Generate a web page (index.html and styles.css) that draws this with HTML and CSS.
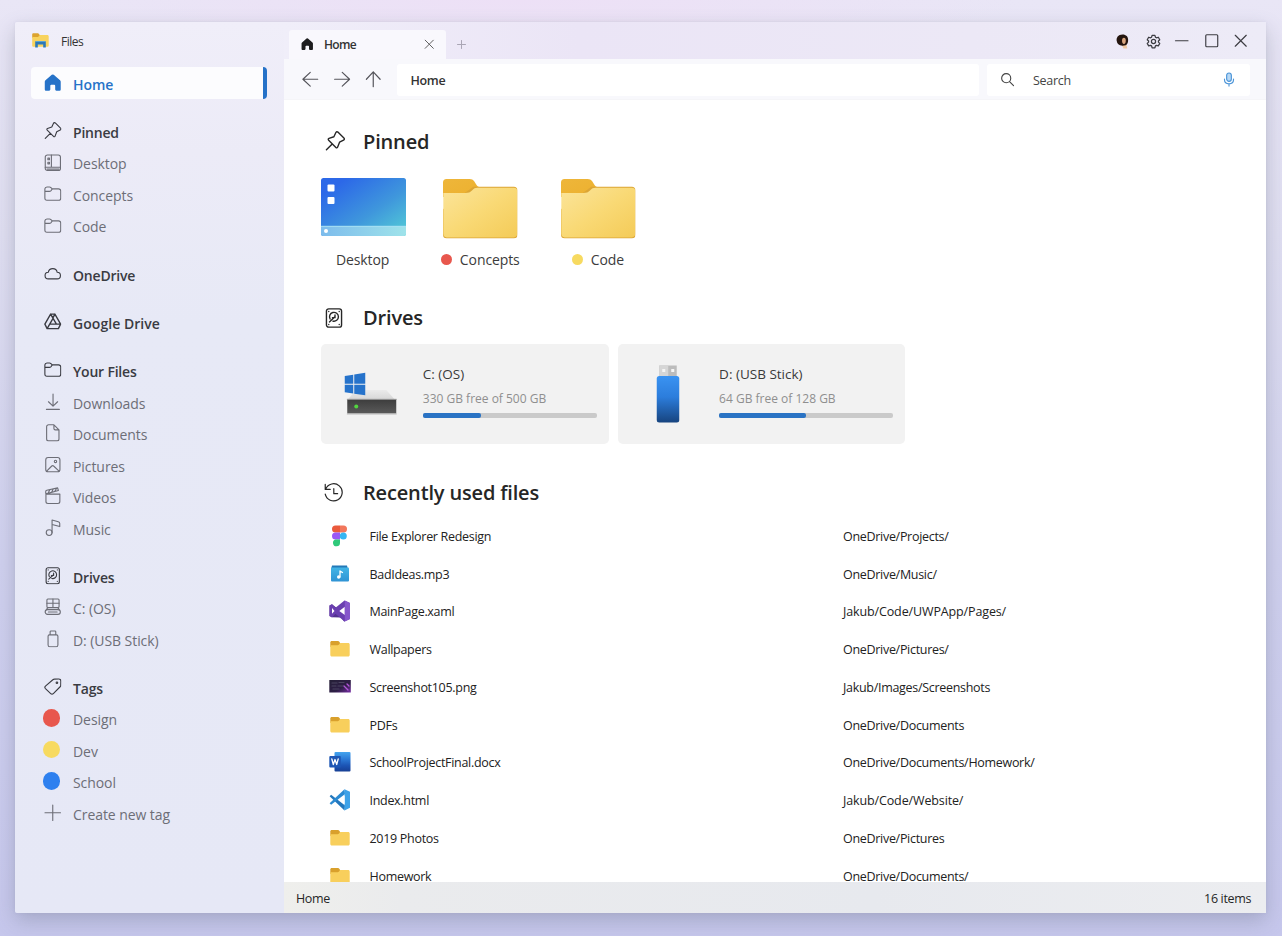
FILE: index.html
```html
<!DOCTYPE html>
<html lang="en">
<head>
<meta charset="utf-8">
<title>Files</title>
<link rel="stylesheet" href="styles.css">
</head>
<body>
<svg class="defs" width="0" height="0" aria-hidden="true">
  <defs>
    <linearGradient id="gDesk" x1="0" y1="0" x2="1" y2="1"><stop offset="0.15" stop-color="#2c68e8"/><stop offset="0.6" stop-color="#3f97dc"/><stop offset="1" stop-color="#54cfd6"/></linearGradient>
    <linearGradient id="gBar" x1="0" y1="0" x2="1" y2="0"><stop offset="0" stop-color="#7dbcec"/><stop offset="1" stop-color="#9fe3ea"/></linearGradient>
    <linearGradient id="gFold" x1="0" y1="0" x2="1" y2="1"><stop offset="0" stop-color="#fbe49a"/><stop offset="0.5" stop-color="#f9d975"/><stop offset="1" stop-color="#f4cb58"/></linearGradient>
    <linearGradient id="gTab" x1="0" y1="0" x2="1" y2="1"><stop offset="0" stop-color="#eeb63a"/><stop offset="1" stop-color="#ecb02e"/></linearGradient>
    <linearGradient id="gUsb" x1="0" y1="0" x2="0" y2="1"><stop offset="0" stop-color="#3a93f2"/><stop offset="0.45" stop-color="#2c7ddc"/><stop offset="1" stop-color="#17447f"/></linearGradient>
    <linearGradient id="gWord" x1="0" y1="0" x2="0" y2="1"><stop offset="0" stop-color="#44a4ee"/><stop offset="0.35" stop-color="#2d7cd8"/><stop offset="0.7" stop-color="#1c54b4"/><stop offset="1" stop-color="#173f94"/></linearGradient>
    <linearGradient id="gShot" x1="0" y1="0" x2="1" y2="1"><stop offset="0" stop-color="#252036"/><stop offset="0.6" stop-color="#2d1d45"/><stop offset="1" stop-color="#7a30a8"/></linearGradient>
    <linearGradient id="gMusic" x1="0" y1="0" x2="0" y2="1"><stop offset="0" stop-color="#42b5e6"/><stop offset="1" stop-color="#2f93d4"/></linearGradient>
    <linearGradient id="gTop" x1="0" y1="0" x2="0" y2="1"><stop offset="0" stop-color="#ebebeb"/><stop offset="1" stop-color="#d6d6d6"/></linearGradient>
    <linearGradient id="gSlab" x1="0" y1="0" x2="0" y2="1"><stop offset="0" stop-color="#3c3c3c"/><stop offset="1" stop-color="#5a5a5a"/></linearGradient>
  </defs>
  <symbol id="home" viewBox="0 0 18 18"><path fill="currentColor" stroke="none" d="M8 .8a1.6 1.6 0 0 1 2 0l6.500 5.600A2 2 0 0 1 17.200 8v7.900A1.300 1.300 0 0 1 16 17.200h-3.300a1.200 1.200 0 0 1-1.200-1.200v-4a1 1 0 0 0-1-1h-3a1 1 0 0 0-1 1v4a1.200 1.200 0 0 1-1.200 1.200H2A1.300 1.300 0 0 1 .8 15.900V8a2 2 0 0 1 .700-1.600z"/></symbol>
  <symbol id="pin" viewBox="0 0 18 18"><path d="M11.600 1 17 6.300c.7.700.5 1.500-.3 1.900l-3.600 1.900-1.700 4.400c-.3.800-1 .9-1.600.3L3.300 8.300c-.6-.6-.5-1.300.3-1.600L8 5.200l1.800-3.800c.4-.8 1.100-1 1.800-.4zM6.500 11.600 1.300 16.900"/></symbol>
  <symbol id="desktop" viewBox="0 0 18 18"><rect x="1.300" y="1" width="15.600" height="16" rx="2.200"/><path d="M7.600 1v12.600M1.300 13.600h15.600M3 15.500h12.500"/><path d="M4 4.300h1.600v1.600H4zM4 8.500h1.600v1.600H4z"/></symbol>
  <symbol id="folder" viewBox="0 0 18 18"><path d="M.9 4A2.200 2.200 0 0 1 3 2h2.700c.6 0 1 .2 1.400.6L8.500 4H15a2.200 2.200 0 0 1 2.200 2.200v7.300a2.200 2.200 0 0 1-2.200 2.200H3A2.200 2.200 0 0 1 .9 13.500zM1 6.600h4.600c.6 0 1-.2 1.400-.6l1.600-2"/></symbol>
  <symbol id="cloud" viewBox="0 0 18 18"><path d="M4.600 14.300a3.400 3.400 0 0 1-.2-6.800 4.700 4.700 0 0 1 9.200 0 3.400 3.400 0 0 1-.2 6.800z"/></symbol>
  <symbol id="gdrive" viewBox="0 0 18 18"><path stroke-width="1.400" d="M6.800 1.100h4.400l5.900 10.300-2.300 4.700H3.200L.9 11.400zM6.800 1.100l6 10.300M11.200 1.100 9.200 5M.9 11.400l2.300 4.700 5.800-10M17.100 11.400H6.500"/></symbol>
  <symbol id="download" viewBox="0 0 18 18"><path d="M9.300 1v12.300M4.600 9l4.700 4.600L14 9M2.500 16.900h13.300"/></symbol>
  <symbol id="document" viewBox="0 0 18 18"><path d="M4.700.8h5.500l5.200 5.200v9.300a2 2 0 0 1-2 2H4.700a2 2 0 0 1-2-2V2.800a2 2 0 0 1 2-2zM10.200.8v3.800c0 .8.500 1.400 1.400 1.400h3.800"/></symbol>
  <symbol id="picture" viewBox="0 0 18 18"><rect x="1.800" y="1.600" width="14.600" height="14.600" rx="2.400"/><circle cx="11.800" cy="5.600" r="1.200"/><path d="m3 15.300 5-5c.6-.6 1.300-.6 1.900 0l5.300 5"/></symbol>
  <symbol id="video" viewBox="0 0 18 18"><path d="M2 7.300h14.300V15a2 2 0 0 1-2 2H4a2 2 0 0 1-2-2zM2 7.300 1.700 5.200a1.600 1.600 0 0 1 1.200-1.800L14 .9l.8 2.700L2 7.100M6.200 2.700l-1.700 3M9.700 1.900 8 5M13 1.200l-1.700 2.900"/></symbol>
  <symbol id="music" viewBox="0 0 18 18"><circle cx="5.300" cy="14" r="3"/><path d="M8.300 14V1l6.400 1.800c1 .3 1.500.8 1.500 1.700v3.300L8.300 5.600"/></symbol>
  <symbol id="drive" viewBox="0 0 18 18"><rect x="2.200" y=".8" width="13.600" height="16.400" rx="2"/><path d="M5.500 9.900a4 4 0 1 1 2.500 1.900M4.900 12.500 9.600 8.200M9.900 6.300v2.400H7.600M4.300 3v.1M13.700 3v.1M13.700 14.800v.1M4.300 14.800v.1"/></symbol>
  <symbol id="osdrive" viewBox="0 0 18 18"><rect x="3" y="1" width="12.500" height="8.800" rx="1"/><path d="M9.200 1v8.800M3 5.400h12.500"/><rect x="1.200" y="12" width="15.600" height="4.800" rx="2.400"/><path d="M2.600 11.900c.4-1.200 1.200-2 2-2h9c1 0 1.600.8 2 2M4.500 14.400h9"/></symbol>
  <symbol id="usb" viewBox="0 0 18 18"><path d="M6.300 5V1.900c0-.5.300-.9.900-.9h4c.6 0 .9.400.9.900V5M5.500 5h7.400c.8 0 1.400.6 1.400 1.400v9c0 1-.8 1.800-1.800 1.800H6c-1 0-1.800-.8-1.800-1.800v-9C4.200 5.600 4.800 5 5.500 5z"/></symbol>
  <symbol id="tag" viewBox="0 0 18 18"><path d="M10.500 1.200 15.200 1a2 2 0 0 1 2.100 2l-.1 4.600c0 .6-.2 1-.6 1.400l-7 7c-.8.800-1.900.8-2.700 0L1.500 10.900c-.8-.8-.8-1.800 0-2.600l7.600-6.500c.4-.4.800-.6 1.400-.6z"/><circle cx="13.300" cy="4.900" r=".8"/></symbol>
  <symbol id="plus" viewBox="0 0 18 18"><path d="M9 1v16M1 9h16"/></symbol>
  <symbol id="history" viewBox="0 0 21 21"><path d="M1.300 1.500v5.200h5.200M1.800 6.300a9 9 0 1 1-.5 5.400M10.300 6v5.200h4"/></symbol>
  <symbol id="left" viewBox="0 0 18 18"><path d="M17.300 9H1M9 1.500 1 9l8 7.500"/></symbol>
  <symbol id="right" viewBox="0 0 18 18"><path d="M.7 9H17M9 1.500 17 9l-8 7.500"/></symbol>
  <symbol id="up" viewBox="0 0 18 18"><path d="M9 17.300V1M1.500 9 9 1l7.500 8"/></symbol>
  <symbol id="close" viewBox="0 0 18 18"><path d="m2 2 14 14M16 2 2 16"/></symbol>
  <symbol id="bigfolder" viewBox="0 0 74 59"><path fill="url(#gTab)" stroke="none" d="M0 3.500A3.500 3.500 0 0 1 3.500 0h23c2 0 3.300.8 4.500 2.200L33 5.500c1 1.500 1.700 2.500 3 2.500h4v10H0z"/><path fill="#dca534" stroke="none" d="M30 7.600h40.500c2 0 3.500 1.300 3.500 3.200v44.700A3.500 3.500 0 0 1 70.500 59h-67A3.500 3.500 0 0 1 0 55.500V30z"/><path fill="url(#gFold)" stroke="none" d="M.3 14h22c3 0 5-.8 6.500-2.500 1.800-2.200 3.200-2.800 5.500-2.800h36.200c2 0 3.200 1.200 3.200 3V54.500a3.500 3.500 0 0 1-3.400 3.500H3.700A3.500 3.500 0 0 1 .3 54.500z"/></symbol>
  <symbol id="smallfolder" viewBox="0 0 20 16"><path fill="#d9a02c" stroke="none" d="M.3 1.500C.3.600.9 0 1.800 0h6c.8 0 1.300.4 1.700 1l.7 1.300V6H.3z"/><path fill="#f8cf5c" stroke="none" d="M.3 4.200H7c1 0 1.600-.3 2.200-1 .5-.8 1-1.100 1.900-1.100h7c1 0 1.600.6 1.600 1.500v10.500c0 .9-.6 1.500-1.600 1.500H1.900c-1 0-1.600-.6-1.600-1.500z"/></symbol>
</svg>

<div class="window">
  <aside class="sidebar">
    <div class="brand">
      <svg class="brand-icon" viewBox="0 0 17 15"><path fill="#dca32f" d="M.2 1.500C.2.700.7.200 1.500.2h4.700L8 2.200V5H.2z"/><path fill="#f8d35e" d="M.2 4H6l2-2h7.300c.8 0 1.400.6 1.400 1.400v9c0 .8-.6 1.300-1.400 1.300H1.500c-.8 0-1.300-.5-1.300-1.300z"/><path fill="#2c78b8" d="M3.200 14.500V9.300c0-.8.600-1.300 1.300-1.300h8c.8 0 1.300.5 1.300 1.300v5.200h-2.600v-3H5.800v3z"/><path fill="#5fa9d6" d="M3.600 8h9.800v.9H3.600z"/></svg>
      <span class="brand-name">Files</span>
    </div>
    <nav class="nav">
      <div class="nav-row current"><svg class="ico"><use href="#home"/></svg><span>Home</span></div>
      <div class="group">
        <div class="nav-row head"><svg class="ico"><use href="#pin"/></svg><span>Pinned</span></div>
        <div class="nav-row"><svg class="ico"><use href="#desktop"/></svg><span>Desktop</span></div>
        <div class="nav-row"><svg class="ico"><use href="#folder"/></svg><span>Concepts</span></div>
        <div class="nav-row"><svg class="ico"><use href="#folder"/></svg><span>Code</span></div>
      </div>
      <div class="group"><div class="nav-row head"><svg class="ico"><use href="#cloud"/></svg><span>OneDrive</span></div></div>
      <div class="group"><div class="nav-row head wide"><svg class="ico"><use href="#gdrive"/></svg><span>Google Drive</span></div></div>
      <div class="group">
        <div class="nav-row head"><svg class="ico"><use href="#folder"/></svg><span>Your Files</span></div>
        <div class="nav-row"><svg class="ico"><use href="#download"/></svg><span>Downloads</span></div>
        <div class="nav-row"><svg class="ico"><use href="#document"/></svg><span>Documents</span></div>
        <div class="nav-row"><svg class="ico"><use href="#picture"/></svg><span>Pictures</span></div>
        <div class="nav-row"><svg class="ico"><use href="#video"/></svg><span>Videos</span></div>
        <div class="nav-row"><svg class="ico"><use href="#music"/></svg><span>Music</span></div>
      </div>
      <div class="group">
        <div class="nav-row head"><svg class="ico"><use href="#drive"/></svg><span>Drives</span></div>
        <div class="nav-row"><svg class="ico"><use href="#osdrive"/></svg><span>C: (OS)</span></div>
        <div class="nav-row"><svg class="ico"><use href="#usb"/></svg><span>D: (USB Stick)</span></div>
      </div>
      <div class="group">
        <div class="nav-row head"><svg class="ico"><use href="#tag"/></svg><span>Tags</span></div>
        <div class="nav-row"><i class="swatch red"></i><span>Design</span></div>
        <div class="nav-row"><i class="swatch yellow"></i><span>Dev</span></div>
        <div class="nav-row"><i class="swatch blue"></i><span>School</span></div>
        <div class="nav-row"><svg class="ico"><use href="#plus"/></svg><span>Create new tag</span></div>
      </div>
    </nav>
  </aside>

  <main class="main">
    <header class="titlebar">
      <div class="tab"><svg class="tab-home"><use href="#home"/></svg><span class="tab-name">Home</span><svg class="tab-close"><use href="#close"/></svg></div>
      <svg class="tab-add"><use href="#plus"/></svg>
      <div class="controls">
        <svg class="avatar" viewBox="0 0 16 16"><path fill="#efc9a4" d="M6 9h6l1 6.500H9z"/><path fill="#24150f" d="M8 .5c4 0 6 2.500 6 5.500 0 2.500-.5 4.500-2.500 6L8 12.500C4 12 2.200 10 2 8 .8 4 3.500.5 8 .5z"/><ellipse cx="9.500" cy="7.300" rx="2" ry="3.300" fill="#d9a680"/></svg>
        <svg class="gear" viewBox="0 0 18 18"><circle cx="9" cy="9" r="2.500"/><path d="M7.300 1.600h3.400l.6 2.200 1.300.8 2.200-.7 1.700 3-1.600 1.500v1.300l1.600 1.500-1.700 3-2.200-.6-1.300.7-.6 2.200H7.300l-.6-2.200-1.300-.7-2.200.6-1.700-3 1.600-1.500V8.400L1.500 6.900l1.700-3 2.200.7 1.300-.8z"/></svg>
        <svg class="ctl" viewBox="0 0 14 14"><path d="M.5 7h13"/></svg>
        <svg class="ctl" viewBox="0 0 14 14"><rect x=".8" y=".8" width="12.400" height="12.400" rx="1"/></svg>
        <svg class="ctl" viewBox="0 0 14 14"><path d="m1.300 1.300 11.400 11.400M12.700 1.300 1.300 12.700"/></svg>
      </div>
    </header>
    <div class="toolbar">
      <div class="arrows"><svg><use href="#left"/></svg><svg><use href="#right"/></svg><svg><use href="#up"/></svg></div>
      <div class="address"><span>Home</span></div>
      <div class="search">
        <svg class="lens" viewBox="0 0 14 14"><circle cx="5.600" cy="5.600" r="4.900"/><path d="m9.200 9.200 4.300 4.300"/></svg>
        <span class="search-text">Search</span>
        <svg class="mic" viewBox="0 0 12 16"><rect x="3.500" y="1" width="5" height="9" rx="2.500" fill="#b7d8f5"/><path d="M1.200 7.500v.8c0 2.500 2 4.300 4.800 4.300s4.800-1.800 4.800-4.300v-.8M6 12.600V15"/></svg>
      </div>
    </div>

    <div class="content">
      <section class="pinned">
        <h2 class="title"><svg><use href="#pin"/></svg><span>Pinned</span></h2>
        <div class="tiles">
          <div class="tile">
            <svg class="deskart" viewBox="0 0 85 58"><rect width="85" height="58" rx="2.500" fill="url(#gDesk)"/><path fill="url(#gBar)" d="M0 48h85v7.500a2.500 2.500 0 0 1-2.500 2.500h-80A2.500 2.500 0 0 1 0 55.500z"/><path stroke="#a8e2f4" d="M.5 48.300h84"/><rect x="6.500" y="6.500" width="7" height="7" rx="1" fill="#fff"/><rect x="6.500" y="19" width="7" height="7" rx="1" fill="#fff"/><circle cx="5" cy="53" r="2" fill="#fff"/></svg>
            <div class="label"><span>Desktop</span></div>
          </div>
          <div class="tile"><svg class="foldart"><use href="#bigfolder"/></svg><div class="label"><i class="dot red"></i><span>Concepts</span></div></div>
          <div class="tile"><svg class="foldart"><use href="#bigfolder"/></svg><div class="label"><i class="dot yellow"></i><span>Code</span></div></div>
        </div>
      </section>

      <section class="drives">
        <h2 class="title"><svg><use href="#drive"/></svg><span>Drives</span></h2>
        <div class="cards">
          <div class="card">
            <svg class="card-art" viewBox="0 0 101 100"><path fill="url(#gTop)" d="M35 46h30l9 10H26z"/><path fill="url(#gSlab)" d="M26 55h49v14.500H26z"/><path stroke="#a6a6a6" d="M26 55.300h49"/><path stroke="#b8b8b8" d="M26 70h49"/><circle cx="35" cy="62.500" r="2" fill="#52d63f"/><path fill="#2673cb" d="m23.500 32 8.500-1.300v9H23.500zM33 30.500l11-1.700v10.900H33zM23.500 40.700H32v8.800l-8.500-1.200zM33 40.700h11v10.600l-11-1.600z"/></svg>
            <div class="info"><div class="name">C: (OS)</div><div class="free">330 GB free of 500 GB</div><div class="meter"><div class="fill" style="width:33.500%"></div></div></div>
          </div>
          <div class="card">
            <svg class="card-art" viewBox="0 0 101 100"><path fill="#bcbcbc" d="M41 21.500h17.500V33H41z"/><path fill="#d6d6d6" d="M41 21.500h9V33h-9z"/><path fill="#f5f5f5" d="M44 25h3v3h-3zM53 25h3v3h-3z"/><rect x="38.500" y="32" width="22.500" height="46.500" rx="2.500" fill="url(#gUsb)"/></svg>
            <div class="info"><div class="name">D: (USB Stick)</div><div class="free">64 GB free of 128 GB</div><div class="meter"><div class="fill" style="width:50%"></div></div></div>
          </div>
        </div>
      </section>

      <section class="recent">
        <h2 class="title"><svg><use href="#history"/></svg><span>Recently used files</span></h2>
        <div class="files">
          <div class="file"><svg class="fi" viewBox="0 0 22 22"><path fill="#ea5a3c" d="M6.500.5H11v7H6.500a3.500 3.500 0 0 1 0-7z"/><path fill="#f2775c" d="M11 .5h3.500a3.500 3.500 0 0 1 0 7H11z"/><path fill="#9a59f5" d="M6.500 7.500H11v7H6.500a3.500 3.500 0 0 1 0-7z"/><circle cx="14.300" cy="11" r="3.500" fill="#35b6f2"/><path fill="#2fc97a" d="M6.500 14.500H11V18a3.500 3.500 0 1 1-4.500-3.500z"/></svg><span class="fname">File Explorer Redesign</span><span class="fpath">OneDrive/Projects/</span></div>
          <div class="file"><svg class="fi" viewBox="0 0 22 22"><path fill="#2379b8" d="M3 2.500h15l1 4H2z"/><rect x="2" y="4.500" width="18" height="14" rx="1" fill="url(#gMusic)"/><path fill="none" stroke="#fff" stroke-width="1.300" d="M11 14V8l2.500 1.500"/><circle cx="9.700" cy="14" r="1.700" fill="#fff"/></svg><span class="fname">BadIdeas.mp3</span><span class="fpath">OneDrive/Music/</span></div>
          <div class="file"><svg class="fi" viewBox="0 0 22 22"><path fill="#52318f" d="M.5 5.500 3 4.300 15.500 14v8L12 17.500 3 17.300.5 16z"/><path fill="#6a3fb0" d="M.5 5.500 3 4.300l3.500 3.500L15.500.5 21 3v16l-5.500 2.500-9-7.800L3 17.500.5 16z"/><path fill="#fff" d="m15.800 6.700-5.500 4.200 5.500 4.200zM3 8v5.800L5.500 11z"/><path fill="#8656cb" d="M15.800.5 21 3v16l-5.200 2.500z"/></svg><span class="fname">MainPage.xaml</span><span class="fpath jk">Jakub/Code/UWPApp/Pages/</span></div>
          <div class="file"><svg class="fo"><use href="#smallfolder"/></svg><span class="fname">Wallpapers</span><span class="fpath">OneDrive/Pictures/</span></div>
          <div class="file"><svg class="fi" viewBox="0 0 22 22"><rect x=".3" y="4" width="21.500" height="12.500" fill="url(#gShot)"/><path stroke="#4b4560" stroke-width="1.200" d="M3 7h5M10 6.500h5M3 10h4M9 10h5M4 13h6"/><path stroke="#b257d8" stroke-width="1.300" d="m15 10 4 4M18 8l2 2"/></svg><span class="fname">Screenshot105.png</span><span class="fpath">Jakub/Images/Screenshots</span></div>
          <div class="file"><svg class="fo"><use href="#smallfolder"/></svg><span class="fname">PDFs</span><span class="fpath">OneDrive/Documents</span></div>
          <div class="file"><svg class="fi" viewBox="0 0 22 22"><rect x="5.500" y="1" width="16" height="19.500" rx="1" fill="url(#gWord)"/><rect x=".3" y="5" width="11.500" height="11.500" rx="1" fill="#1f57b5"/><path fill="none" stroke="#fff" stroke-width="1.300" d="m2.800 8 1.500 5.500L6 8.500l1.700 5L9.200 8"/></svg><span class="fname">SchoolProjectFinal.docx</span><span class="fpath">OneDrive/Documents/Homework/</span></div>
          <div class="file"><svg class="fi" viewBox="0 0 22 22"><path fill="#2277bd" d="m.6 7.200 1.500-1.500 14 10.800-.6 5z"/><path fill="#2b8ad2" d="m.6 14.200 1.500 1.500 14-10.800-.6-4.700z"/><path fill="#3ea2e8" d="M15.500.3 21 2.800v16l-5.500 2.700z"/><path fill="#fff" d="m15.600 6.500-5.600 4.300 5.600 4.300z"/></svg><span class="fname">Index.html</span><span class="fpath jk">Jakub/Code/Website/</span></div>
          <div class="file"><svg class="fo"><use href="#smallfolder"/></svg><span class="fname">2019 Photos</span><span class="fpath">OneDrive/Pictures</span></div>
          <div class="file"><svg class="fo"><use href="#smallfolder"/></svg><span class="fname">Homework</span><span class="fpath">OneDrive/Documents/</span></div>
        </div>
      </section>
    </div>
    <footer class="status"><span>Home</span><span>16 items</span></footer>
  </main>
</div>
</body>
</html>
```
FILE: styles.css
```css
* { box-sizing: border-box; }
html, body { margin: 0; height: 100%; }
body {
  font-family: "Open Sans", "Noto Sans", sans-serif;
  color: #262626;
  overflow: hidden;
  padding: 22px 16px 23px 15px;
  background:
    radial-gradient(500px 60px at 520px 0, #ede0f6 0%, transparent 100%),
    linear-gradient(180deg, #e9e6f6 0%, #dfdef1 25%, #cfd0ee 60%, #c6c7ec 100%);
}
svg { display: block; flex: none; fill: none; stroke: currentColor; stroke-linecap: round; stroke-linejoin: round; overflow: visible; }
.defs { position: absolute; }
.window {
  display: flex;
  height: 891px;
  border-radius: 2px;
  box-shadow: 0 8px 20px rgba(95, 105, 125, .32), 0 0 3px rgba(120, 120, 160, .12);
}

/* sidebar */
.sidebar { width: 269px; flex: none; padding: 0 17px 0 16px; background: linear-gradient(180deg, #f0eef9 0, #ecebf7 130px, #e7e9f6 300px, #e6e8f6 100%); border-radius: 2px 0 0 2px; }
.brand { display: flex; align-items: center; height: 37px; padding-bottom: 1px; gap: 12px; }
.brand-icon { width: 17px; height: 15px; stroke: none; margin-left: 1px; }
.brand-name { font-size: 12px; letter-spacing: -.5px; color: #333; padding-top: 3px; }
.nav { padding-top: 8px; font-size: 14px; letter-spacing: -.07px; color: #6d6e77; }
.nav-row { display: flex; align-items: center; height: 31.5px; padding-left: 12.500px; gap: 12px; }
.nav-row span { padding-top: 2px; }
.ico { width: 17.500px; height: 17.500px; stroke-width: 1.150; margin-bottom: 1px; }
.nav .group { margin-top: 16.700px; }
.nav-row.head { color: #3a3b42; font-weight: 600; letter-spacing: -.2px; }
.nav-row.wide { letter-spacing: .05px; }
.nav-row.current { height: 32px; color: #2672c8; font-weight: 600; background: #fcfcfe; border-radius: 4px; border-right: 4px solid #2672c8; width: 236px; }
.swatch { width: 17.500px; height: 17.500px; border-radius: 50%; flex: none; margin: 0 1px 2px -1px; }
.red { background: #e8574d; }
.yellow { background: #f7da60; }
.blue { background: #2e80ef; }

/* title bar and toolbar */
.main { flex: 1; min-width: 0; display: flex; flex-direction: column; background: #fff; }
.titlebar { height: 37px; flex: none; display: flex; align-items: flex-end; padding-left: 5px; background: linear-gradient(90deg, #f0eef9, #ebe5f6 30%, #ece8f6 70%, #edebf7); }
.tab { width: 157px; height: 29px; display: flex; align-items: center; padding: 0 11.500px; background: #f9f8fd; border-radius: 3px 3px 0 0; }
.tab-home { width: 12.500px; height: 12.500px; color: #1d1d1f; }
.tab-name { font-size: 12px; font-weight: 600; letter-spacing: -.65px; margin-left: 11px; flex: 1; color: #333; }
.tab-close { width: 10.500px; height: 10.500px; stroke-width: 1.600; color: #555; }
.tab-add { width: 9px; height: 9px; margin: 0 0 10px 10.500px; stroke-width: 2; color: #aaa6b5; }
.controls { margin-left: auto; display: flex; align-items: center; gap: 15.500px; height: 36px; padding-right: 18.500px; color: #3c3c42; }
.avatar { width: 15px; height: 15px; stroke: none; margin-right: 0; }
.gear { width: 15px; height: 15px; stroke-width: 1.500; margin-right: -1px; }
.ctl { width: 13.500px; height: 13.500px; stroke-width: 1.200; }
.ctl + .ctl { margin-left: .3px; }
.toolbar { height: 41px; flex: none; display: flex; align-items: center; padding: 0 16px 0 18px; background: #f8f8fc; border-bottom: 1px solid #f5f5f8; }
.toolbar span { padding-top: 2px; }
.arrows { display: flex; gap: 15px; width: 95px; color: #55555b; padding-top: 1px; }
.arrows svg { width: 16.500px; height: 16.500px; stroke-width: 1.300; }
.address { width: 582px; height: 32px; margin-top: 1px; background: #fff; border-radius: 3px; display: flex; align-items: center; padding-left: 13.500px; font-size: 12.500px; font-weight: 600; letter-spacing: -.35px; color: #333; }
.search { margin-top: 1px; margin-left: 8px; width: 263px; height: 32px; background: #fff; border-radius: 3px; display: flex; align-items: center; padding: 0 15.500px 0 14px; }
.lens { width: 13px; height: 13px; stroke-width: 1.200; color: #444; }
.search-text { font-size: 12.500px; letter-spacing: -.3px; margin-left: 19px; flex: 1; color: #444; }
.mic { width: 12px; height: 15px; stroke: #4a94d8; stroke-width: 1.200; }

/* content */
.content { flex: 1; min-height: 0; overflow: hidden; padding-left: 37px; }
.title { display: flex; align-items: center; height: 30px; margin: 0; padding-left: 3px; gap: 19px; font-size: 20px; font-weight: 600; letter-spacing: -.16px; color: #262626; }
.title span { margin-top: -2px; }
.title svg { width: 20px; height: 20px; stroke-width: 1.250; }
.pinned .title svg { margin: -2px -1px 0 1px; }
.pinned { padding-top: 27px; }
.tiles { display: flex; gap: 33px; padding-top: 21px; }
.tile { width: 84.700px; height: 92px; display: flex; flex-direction: column; align-items: center; }
.deskart { width: 85px; height: 58px; stroke: none; }
.foldart { width: 74.500px; height: 59.400px; margin: .5px 1px 0 0; }
.label { display: flex; align-items: center; gap: 8px; font-size: 14px; letter-spacing: -.1px; color: #3c3c3c; height: 22px; margin: auto 1.500px 0 0; }
.dot { width: 11px; height: 11px; border-radius: 50%; }
.drives { padding-top: 33px; }
.cards { display: flex; gap: 9px; padding: 10.500px 0 0 .3px; }
.card { width: 287.300px; height: 100px; background: #f2f2f2; border-radius: 5px; display: flex; }
.card-art { width: 101.500px; height: 100px; stroke: none; }
.info { padding-top: 20px; width: 174px; }
.name { font-size: 13.500px; line-height: 20px; letter-spacing: 0; color: #3a3a3a; white-space: nowrap; }
.free { font-size: 12px; line-height: 18px; margin-top: 6px; color: #8f8f8f; white-space: nowrap; }
.meter { height: 4.500px; margin-top: 5.500px; border-radius: 2px; background: #cacaca; }
.fill { height: 100%; border-radius: 2px; background: #2a73c4; }
.recent { padding-top: 34.500px; }
.files { padding-top: 9px; font-size: 12.500px; letter-spacing: -.3px; color: #222; }
.file { display: flex; align-items: center; height: 37.750px; padding-left: 8px; }
.file span { padding-top: 1px; }
.fi { width: 22px; height: 22px; stroke: none; }
.fo { width: 20px; height: 16px; margin: 0 1px; }
.fname { width: 473.500px; margin-left: 18.500px; }
.jk { letter-spacing: -.13px; }

/* status bar */
.status { height: 31px; flex: none; display: flex; align-items: center; justify-content: space-between; padding: 1px 15px 0 12px; font-size: 12.500px; letter-spacing: -.35px; background: linear-gradient(90deg, #efefec 0, #eaebed 12%, #e7e9ee 60%, #ecedf0 100%); }
```
